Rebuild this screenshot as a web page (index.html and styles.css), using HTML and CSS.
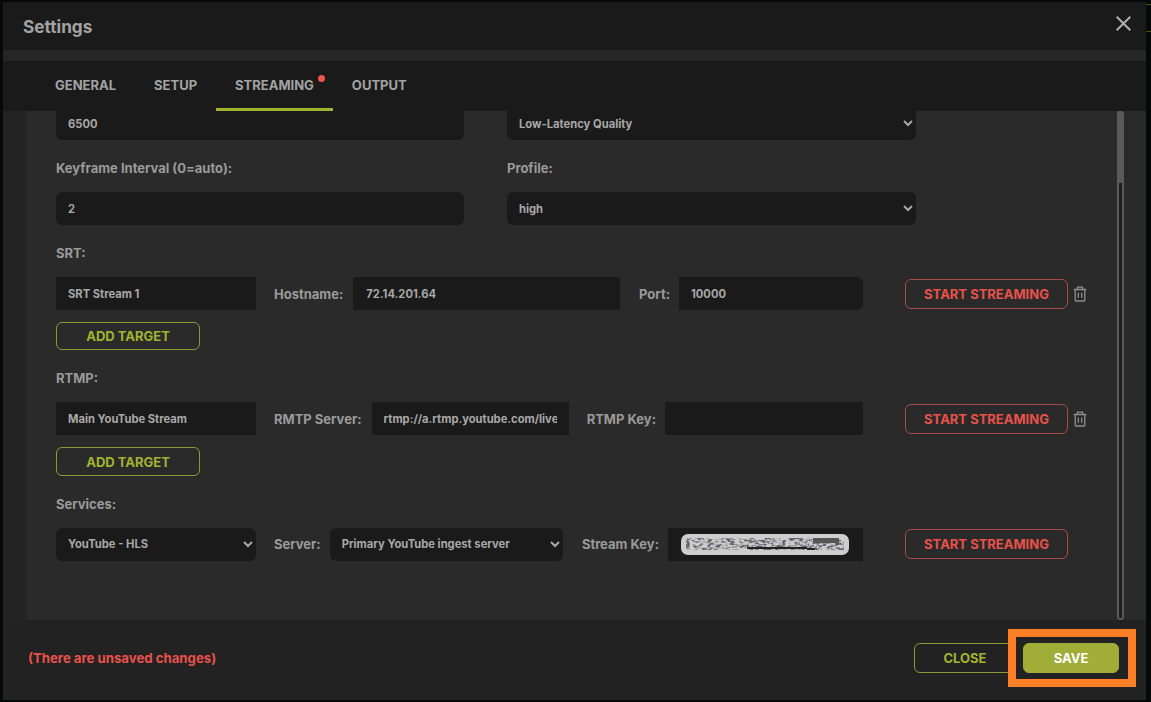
FILE: index.html
```html
<!DOCTYPE html>
<html lang="en">
<head>
  <meta charset="UTF-8">
  <title>Settings</title>
  <link rel="stylesheet" href="styles.css">
</head>
<body>
  <div class="behind-button"></div>
  <div class="modal">
    <header class="modal-header">
      <h2>Settings</h2>
      <svg class="close-icon" width="15" height="15" viewBox="0 0 15 15"><path d="M0.7 0.7 L14.3 14.3 M14.3 0.7 L0.7 14.3" stroke="#b0b0b0" stroke-width="2" fill="none"/></svg>
    </header>

    <nav class="tabs">
      <div class="tab">General</div>
      <div class="tab">Setup</div>
      <div class="tab active">Streaming<span class="tab-dot"></span></div>
      <div class="tab">Output</div>
    </nav>

    <div class="modal-body">
      <div class="panel">
        <div class="panel-inner">
          <div class="two-col">
            <input class="field-input" value="6500">
            <select class="field-select"><option>Low-Latency Quality</option></select>
          </div>
          <div class="two-col labels">
            <label>Keyframe Interval (0=auto):</label>
            <label>Profile:</label>
          </div>
          <div class="two-col">
            <input class="field-input" value="2">
            <select class="field-select"><option>high</option></select>
          </div>

          <label class="section-label">SRT:</label>
          <div class="target-row">
            <div class="target-fields">
              <input class="box name-box" value="SRT Stream 1">
              <label>Hostname:</label>
              <input class="box host-box" value="72.14.201.64">
              <label>Port:</label>
              <input class="box port-box" value="10000">
            </div>
            <button class="btn-stream">START STREAMING</button>
            <svg class="trash" width="14" height="16" viewBox="0 0 14 16" fill="none" stroke="#8f8f8f" stroke-width="1.3"><path d="M0.8 3.5 H13.2 M4.5 3.5 V1.2 H9.5 V3.5 M2.2 3.5 V14 Q2.2 15 3.2 15 H10.8 Q11.8 15 11.8 14 V3.5 M5.3 6.8 V11.8 M8.7 6.8 V11.8"/></svg>
          </div>
          <button class="btn-add">ADD TARGET</button>

          <label class="section-label">RTMP:</label>
          <div class="target-row">
            <div class="target-fields">
              <input class="box name-box" value="Main YouTube Stream">
              <label>RMTP Server:</label>
              <input class="box server-box" value="rtmp://a.rtmp.youtube.com/live2">
              <label>RTMP Key:</label>
              <input class="box key-box" value="">
            </div>
            <button class="btn-stream">START STREAMING</button>
            <svg class="trash" width="14" height="16" viewBox="0 0 14 16" fill="none" stroke="#8f8f8f" stroke-width="1.3"><path d="M0.8 3.5 H13.2 M4.5 3.5 V1.2 H9.5 V3.5 M2.2 3.5 V14 Q2.2 15 3.2 15 H10.8 Q11.8 15 11.8 14 V3.5 M5.3 6.8 V11.8 M8.7 6.8 V11.8"/></svg>
          </div>
          <button class="btn-add">ADD TARGET</button>

          <label class="section-label">Services:</label>
          <div class="target-row">
            <div class="target-fields">
              <select class="box-select name-box"><option>YouTube - HLS</option></select>
              <label>Server:</label>
              <select class="box-select ingest-box"><option>Primary YouTube ingest server</option></select>
              <label>Stream Key:</label>
              <div class="stream-box">
                <!-- the key is scribbled out in the screenshot -->
                <svg width="168" height="23" viewBox="0 0 168 23">
                  <defs>
                    <filter id="speckle" x="0" y="0" width="100%" height="100%">
                      <feTurbulence type="fractalNoise" baseFrequency="0.22 0.4" numOctaves="3" seed="11"/>
                      <feColorMatrix values="0 0 0 0 0.12  0 0 0 0 0.12  0 0 0 0 0.15  3 3 0 0 -2.7"/>
                    </filter>
                  </defs>
                  <rect x="0" y="1" width="168" height="21" rx="7" fill="#cdcdcd"/>
                  <rect x="5" y="5" width="158" height="12" filter="url(#speckle)"/>
                  <rect x="66" y="14" width="60" height="2" fill="#222"/>
                  <rect x="126" y="15" width="8" height="2" fill="#222"/>
                  <rect x="132" y="5" width="26" height="5" fill="#555"/>
                </svg>
              </div>
            </div>
            <button class="btn-stream">START STREAMING</button>
          </div>
        </div>
        <div class="scrollbar"><div class="scrollbar-thumb"></div></div>
      </div>
    </div>

    <footer class="modal-footer">
      <span class="unsaved">(There are unsaved changes)</span>
      <div class="footer-buttons">
        <button class="btn-close">CLOSE</button>
        <button class="btn-save">SAVE</button>
      </div>
    </footer>
  </div>
  <div class="highlight"></div>
</body>
</html>
```

FILE: styles.css
```css
html, body {
  height: 100%;
}
body {
  margin: 0;
  background: #070808;
  font-family: 'Inter', sans-serif;
  overflow: hidden;
  position: relative;
}
.behind-button {
  position: absolute;
  left: 1146px;
  top: 4px;
  width: 20px;
  height: 28px;
  box-sizing: border-box;
  border-top: 1px solid #4d5216;
  border-bottom: 1px solid #4d5216;
}
.modal {
  position: relative;
  width: 1143px;
  height: 698px;
  margin: 2px 0 0 3px;
  background: #262626;
  display: flex;
  flex-direction: column;
}
.modal-header {
  height: 48px;
  flex: none;
  background: #1a1a1a;
  display: flex;
  align-items: center;
  justify-content: space-between;
  padding: 0 15px 0 20px;
  box-sizing: border-box;
}
h2 {
  margin: 0;
  font-size: 17.2px;
  font-weight: 700;
  color: #a3a3a3;
}
.close-icon {
  margin-bottom: 5px;
}
.tabs {
  margin-top: 11px;
  height: 50px;
  flex: none;
  background: #1a1a1a;
  display: flex;
  padding-left: 33px;
}
.tab {
  position: relative;
  padding: 0 19px;
  line-height: 49px;
  height: 50px;
  box-sizing: border-box;
  font-size: 13px;
  font-weight: 700;
  text-transform: uppercase;
  color: #a3a3a3;
}
.tab.active {
  border-bottom: 3px solid #a2b32f;
}
.tab-dot {
  position: absolute;
  top: 14px;
  right: 8px;
  width: 7px;
  height: 7px;
  border-radius: 50%;
  background: #ef5350;
}
.modal-body {
  flex: 1;
  min-height: 0;
  padding-left: 23px;
  background: #242424;
}
.panel {
  height: 509px;
  background: #2a2a2a;
  position: relative;
  overflow: hidden;
}
.panel-inner {
  margin-top: -4px;
  padding-left: 30px;
}
.two-col {
  display: flex;
  gap: 43px;
}
.two-col > * {
  width: 408px;
}
.two-col > select {
  width: 409px;
}
.two-col.labels {
  margin: 20px 0 16px;
}
label {
  font-size: 13px;
  font-weight: 700;
  color: #9a9a9a;
  line-height: 16px;
}
.field-input, .field-select {
  height: 33px;
  box-sizing: border-box;
  background: #1a1a1a;
  border: none;
  border-radius: 6px;
  padding: 0 12px;
  font-family: 'Inter', sans-serif;
  font-size: 11.2px;
  font-weight: 700;
  color: #a8a8a8;
  outline: none;
}
.field-select {
  padding: 0 8px;
}
.field-select, .box-select {
  color-scheme: dark;
}
.section-label {
  display: block;
  margin: 20px 0 16px;
}
.target-row {
  display: flex;
  align-items: center;
}
.target-fields {
  width: 807px;
  display: flex;
  align-items: center;
  margin-right: 42px;
}
.target-fields label {
  white-space: nowrap;
}
.box, .box-select {
  height: 33px;
  box-sizing: border-box;
  background: #1a1a1a;
  border: none;
  padding: 0 12px;
  font-family: 'Inter', sans-serif;
  font-size: 11.2px;
  font-weight: 700;
  color: #a8a8a8;
  outline: none;
}
.box-select {
  border-radius: 6px;
  padding: 0 8px;
}
.name-box {
  width: 200px;
  flex: none;
  margin-right: 18px;
}
.host-box {
  flex: 1;
  min-width: 0;
  margin: 0 19px 0 10px;
  padding-left: 13px;
}
.port-box {
  width: 184px;
  flex: none;
  margin-left: 9px;
  border-radius: 0 6px 6px 0;
}
.server-box {
  flex: 1;
  min-width: 0;
  margin: 0 18px 0 10px;
}
.key-box {
  width: 198px;
  flex: none;
  margin-left: 9px;
}
.ingest-box {
  flex: 1;
  min-width: 0;
  margin: 0 19px 0 9px;
}
.stream-box {
  width: 195px;
  flex: none;
  height: 33px;
  box-sizing: border-box;
  margin-left: 9px;
  padding: 5px 0 0 13px;
  background: #1a1a1a;
}
.stream-box svg {
  display: block;
  filter: blur(0.6px);
}
.btn-stream {
  width: 163px;
  height: 30px;
  flex: none;
  box-sizing: border-box;
  background: transparent;
  border: 1px solid #a84c46;
  border-radius: 6px;
  font-family: 'Inter', sans-serif;
  font-size: 13px;
  font-weight: 700;
  color: #e8524a;
  padding: 0;
}
.trash {
  margin-left: 5px;
}
.btn-add {
  display: block;
  margin-top: 12px;
  width: 144px;
  height: 28.4px;
  box-sizing: border-box;
  background: transparent;
  border: 1px solid #8b9a32;
  border-radius: 6px;
  font-family: 'Inter', sans-serif;
  font-size: 13px;
  font-weight: 700;
  color: #a2b32f;
  padding: 0;
}
.scrollbar {
  position: absolute;
  top: 0;
  bottom: 0;
  right: 22px;
  width: 7px;
  box-sizing: border-box;
  border: 2px solid #5a5a5a;
  border-radius: 3px;
  background: #1e1e1e;
}
.scrollbar-thumb {
  height: 72px;
  margin: -2px;
  background: #5a5a5a;
  border-radius: 3px;
}
.modal-footer {
  height: 80px;
  flex: none;
  background: #222;
  display: flex;
  align-items: center;
  justify-content: space-between;
  padding: 0 27px 4px 25px;
  box-sizing: border-box;
}
.unsaved {
  font-size: 13.2px;
  font-weight: 700;
  color: #e8524a;
}
.footer-buttons {
  display: flex;
  gap: 7px;
}
.btn-close, .btn-save {
  height: 30px;
  box-sizing: border-box;
  border-radius: 6px;
  font-family: 'Inter', sans-serif;
  font-size: 13px;
  font-weight: 700;
  padding: 0;
}
.btn-close {
  width: 102px;
  background: transparent;
  border: 1px solid #8b9a32;
  color: #a2b32f;
}
.btn-save {
  width: 96px;
  background: #a0ad36;
  border: 1px solid #a0ad36;
  color: #fff;
}
.highlight {
  position: absolute;
  left: 1008px;
  top: 629px;
  width: 128px;
  height: 58px;
  box-sizing: border-box;
  border: 8px solid #ff7f27;
}
```
